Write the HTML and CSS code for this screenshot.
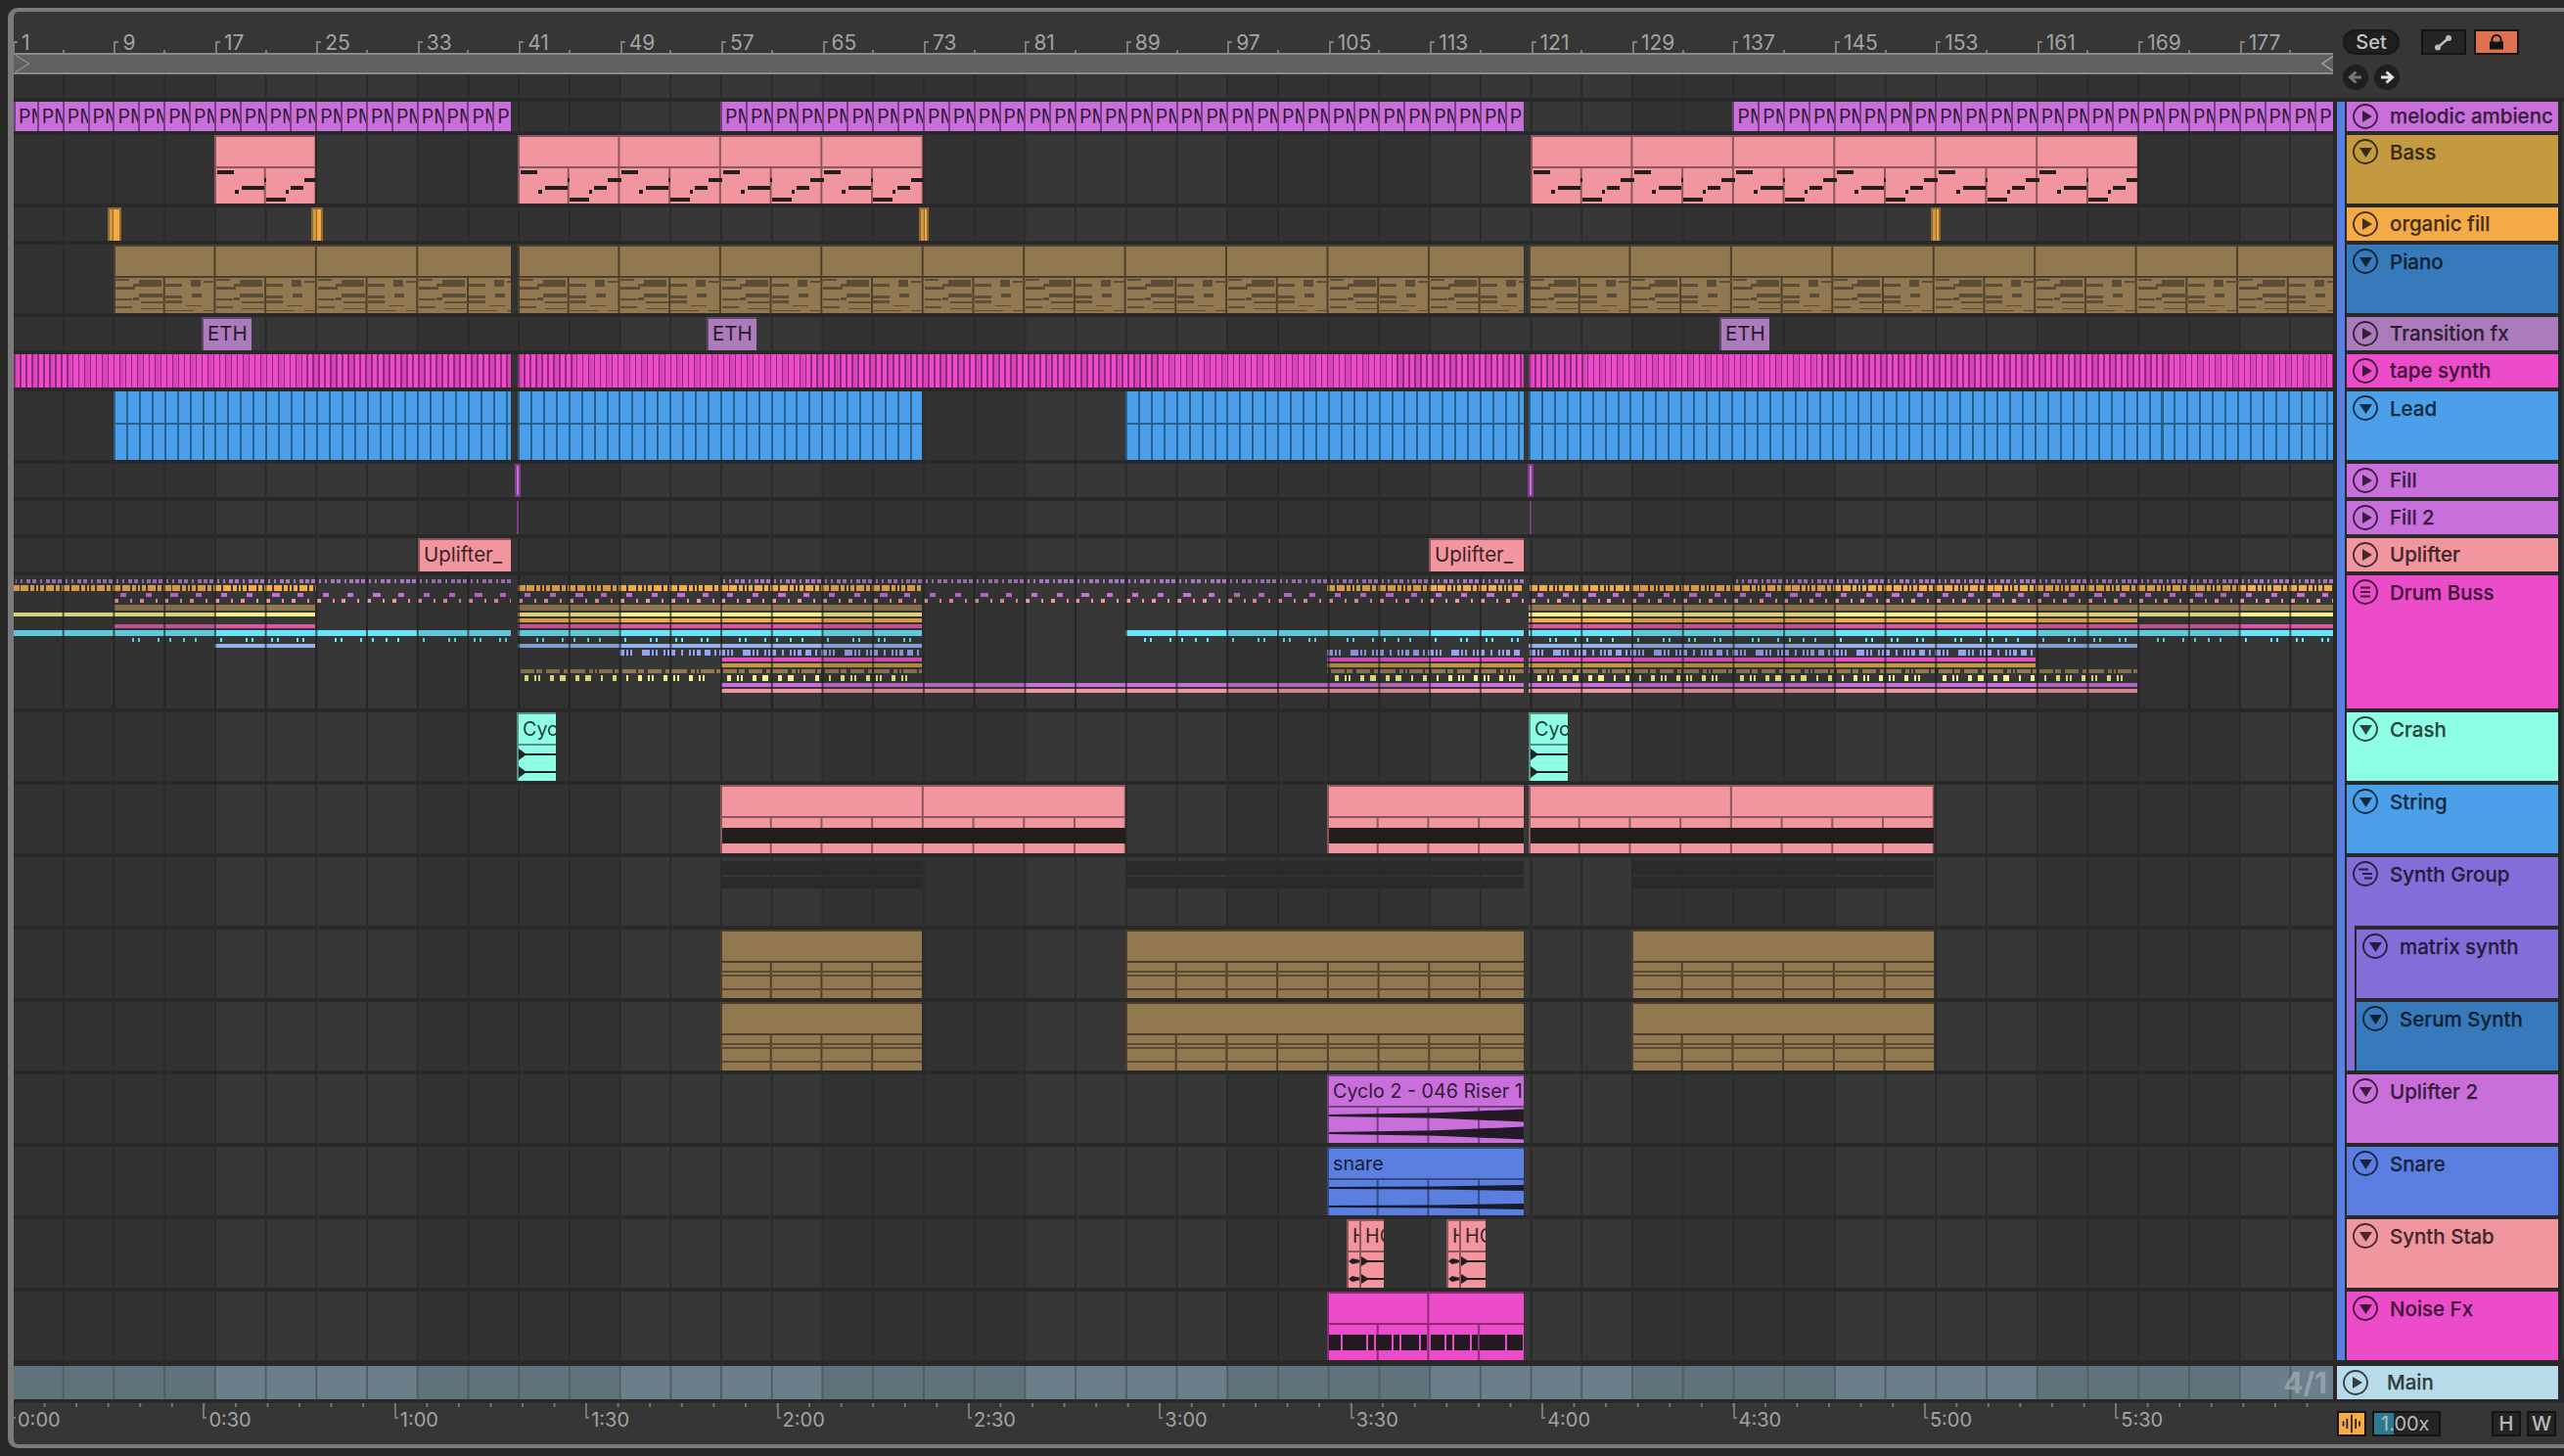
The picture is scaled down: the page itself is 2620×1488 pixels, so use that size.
FILE: index.html
```html
<!DOCTYPE html>
<html lang="en">
<head>
<meta charset="utf-8">
<title>Arrangement View</title>
<link rel="stylesheet" href="styles.css">
</head>
<body>
<svg class="defs" width="0" height="0" aria-hidden="true">
  <symbol id="ic-right" viewBox="0 0 26 26"><circle cx="13" cy="13" r="12" fill="none" stroke="currentColor" stroke-width="1.8"/><polygon points="10,7 20,13 10,19" fill="currentColor"/></symbol>
  <symbol id="ic-down" viewBox="0 0 26 26"><circle cx="13" cy="13" r="12" fill="none" stroke="currentColor" stroke-width="1.8"/><polygon points="7,9 20,9 13.5,19" fill="currentColor"/></symbol>
  <symbol id="ic-group" viewBox="0 0 26 26"><circle cx="13" cy="13" r="12" fill="none" stroke="currentColor" stroke-width="1.8"/><path d="M8 8.5h10M8 13h10M8 17.5h10" stroke="currentColor" stroke-width="2"/></symbol>
  <symbol id="ic-stagger" viewBox="0 0 26 26"><circle cx="13" cy="13" r="12" fill="none" stroke="currentColor" stroke-width="1.8"/><path d="M6 8.5h10M10 13h10M12 17.5h8" stroke="currentColor" stroke-width="2"/></symbol>
</svg>
<div class="frame">
  <div class="top">
    <div class="timeline">
      <div class="ruler">
        <span class="bar">1</span><span class="bar">9</span><span class="bar">17</span><span class="bar">25</span><span class="bar">33</span><span class="bar">41</span><span class="bar">49</span><span class="bar">57</span><span class="bar">65</span><span class="bar">73</span><span class="bar">81</span><span class="bar">89</span><span class="bar">97</span><span class="bar">105</span><span class="bar">113</span><span class="bar">121</span><span class="bar">129</span><span class="bar">137</span><span class="bar">145</span><span class="bar">153</span><span class="bar">161</span><span class="bar">169</span><span class="bar">177</span>
      </div>
      <div class="loop">
        <svg class="chev-l" viewBox="0 0 18 22"><path d="M0.5 0.5 L17 11 L0.5 21.5" fill="none" stroke="#8e8e8e" stroke-width="1.6"/></svg>
        <svg class="chev-r" viewBox="0 0 12 16"><path d="M12 0.5 L1 8 L12 15.5" fill="none" stroke="#9a9a9a" stroke-width="1.6"/></svg>
      </div>
      <div class="lane h24"></div>
    </div>
    <div class="ctrl">
      <div class="ctrl-row">
        <div class="pill">Set</div>
        <div class="sq expand"><svg viewBox="0 0 46 26" width="46" height="26"><path d="M17 18.500 L28 9" stroke="#bdbdbd" stroke-width="2.4"/><circle cx="17" cy="18.500" r="3" fill="#bdbdbd"/><circle cx="28" cy="9" r="3" fill="#bdbdbd"/></svg></div>
        <div class="sq lock"><svg viewBox="0 0 46 26" width="46" height="26"><path d="M18.500 13 V10.500 a4.500 4.500 0 0 1 9 0 V13" fill="none" stroke="#111" stroke-width="2"/><rect x="16" y="12.500" width="14" height="8" fill="#111"/></svg></div>
      </div>
      <div class="ctrl-row nav">
        <div class="round"><svg viewBox="0 0 26 26" width="26" height="26"><path d="M19 13H9M13.500 7.500 7.500 13l6 5.500" fill="none" stroke="#777" stroke-width="3"/></svg></div>
        <div class="round"><svg viewBox="0 0 26 26" width="26" height="26"><path d="M7 13h10M12.500 7.500 18.500 13l-6 5.500" fill="none" stroke="#e4e4e4" stroke-width="3"/></svg></div>
      </div>
    </div>
  </div>

  <div class="main">
    <div class="lanes">
      <div class="lane h30" id="l-melodic"></div>
      <div class="lane h70" id="l-bass"></div>
      <div class="lane h34" id="l-organic"></div>
      <div class="lane h70" id="l-piano"></div>
      <div class="lane h34" id="l-trans"></div>
      <div class="lane h34" id="l-tape"></div>
      <div class="lane h70" id="l-lead"></div>
      <div class="lane h34" id="l-fill"></div>
      <div class="lane h34" id="l-fill2"></div>
      <div class="lane h34" id="l-upl"></div>
      <div class="lane h136" id="l-drum"></div>
      <div class="lane h70" id="l-crash"></div>
      <div class="lane h70" id="l-string"></div>
      <div class="lane h70" id="l-group"></div>
      <div class="lane h70" id="l-matrix"></div>
      <div class="lane h70" id="l-serum"></div>
      <div class="lane h70" id="l-upl2"></div>
      <div class="lane h70" id="l-snare"></div>
      <div class="lane h70" id="l-stab"></div>
      <div class="lane h70" id="l-noise"></div>
    </div>
    <div class="bluebar"></div>
    <div class="heads">
      <div class="head h30 purple"><svg class="ic"><use href="#ic-right"/></svg><span>melodic ambienc</span></div>
      <div class="head h70 gold"><svg class="ic"><use href="#ic-down"/></svg><span>Bass</span></div>
      <div class="head h34 orange"><svg class="ic"><use href="#ic-right"/></svg><span>organic fill</span></div>
      <div class="head h70 steel"><svg class="ic"><use href="#ic-down"/></svg><span>Piano</span></div>
      <div class="head h34 mauve"><svg class="ic"><use href="#ic-right"/></svg><span>Transition fx</span></div>
      <div class="head h34 magenta"><svg class="ic"><use href="#ic-right"/></svg><span>tape synth</span></div>
      <div class="head h70 sky"><svg class="ic"><use href="#ic-down"/></svg><span>Lead</span></div>
      <div class="head h34 purple"><svg class="ic"><use href="#ic-right"/></svg><span>Fill</span></div>
      <div class="head h34 purple"><svg class="ic"><use href="#ic-right"/></svg><span>Fill 2</span></div>
      <div class="head h34 pink"><svg class="ic"><use href="#ic-right"/></svg><span>Uplifter</span></div>
      <div class="head h136 magenta"><svg class="ic"><use href="#ic-group"/></svg><span>Drum Buss</span></div>
      <div class="head h70 mint"><svg class="ic"><use href="#ic-down"/></svg><span>Crash</span></div>
      <div class="head h70 sky"><svg class="ic"><use href="#ic-down"/></svg><span>String</span></div>
      <div class="group violet">
        <div class="head h70 violet"><svg class="ic"><use href="#ic-stagger"/></svg><span>Synth Group</span></div>
        <div class="nest">
          <div class="head h70 violet inner"><svg class="ic"><use href="#ic-down"/></svg><span>matrix synth</span></div>
          <div class="head h70 steel inner"><svg class="ic"><use href="#ic-down"/></svg><span>Serum Synth</span></div>
        </div>
      </div>
      <div class="head h70 purple"><svg class="ic"><use href="#ic-down"/></svg><span>Uplifter 2</span></div>
      <div class="head h70 blue"><svg class="ic"><use href="#ic-down"/></svg><span>Snare</span></div>
      <div class="head h70 pink"><svg class="ic"><use href="#ic-down"/></svg><span>Synth Stab</span></div>
      <div class="head h70 magenta"><svg class="ic"><use href="#ic-down"/></svg><span>Noise Fx</span></div>
    </div>
    <div class="edge"></div>
  </div>

  <div class="foot">
    <div class="lane h34 master"><span class="sig">4/1</span></div>
    <div class="head h34 ice master-head"><svg class="ic"><use href="#ic-right"/></svg><span>Main</span></div>
  </div>

  <div class="timebar">
    <div class="times">
      <span class="time first">0:00</span><span class="time">0:30</span><span class="time">1:00</span><span class="time">1:30</span><span class="time">2:00</span><span class="time">2:30</span><span class="time">3:00</span><span class="time">3:30</span><span class="time">4:00</span><span class="time">4:30</span><span class="time">5:00</span><span class="time">5:30</span>
    </div>
    <div class="tools">
      <div class="wave-btn"><svg viewBox="0 0 30 26" width="26" height="22"><path d="M5 10v6M9.500 7v12M15 2v22M20 7v12M24.500 10v6" stroke="#1a1a1a" stroke-width="2"/></svg></div>
      <div class="speed"><span class="speed-fill"></span><span class="speed-text">1.00x</span></div>
      <div class="key first-key">H</div>
      <div class="key">W</div>
    </div>
  </div>
</div>
<script src="script.js"></script>
</body>
</html>
```
FILE: styles.css
```css
* { box-sizing: border-box; }
html, body { margin: 0; padding: 0; height: 100%; }
body { background: #292929; overflow: hidden; width: 2620px; height: 1488px; font-family: "Inter", "Noto Sans", sans-serif; }
.defs { position: absolute; }

.frame { margin: 8px 0 0 8px; width: 2630px; height: 1472px; border: solid #7b7b7b; border-width: 4px 0 4px 6px; border-radius: 10px 0 0 10px; background: #363636; display: flex; flex-direction: column; }

.top { height: 88px; display: flex; }
.timeline { width: 2370px; display: flex; flex-direction: column; flex: none; }
.ruler { height: 42px; display: flex; overflow: hidden; margin-left: -1px; }
.bar { flex: none; width: 103.440px; padding: 21px 0 0 9px; font-size: 21px; line-height: 22px; color: #a3a3a3;
  background:
    linear-gradient(#7d7d7d, #7d7d7d) 0 bottom / 2px 12px no-repeat,
    linear-gradient(#7d7d7d, #7d7d7d) 0 30px / 5px 2px no-repeat,
    linear-gradient(#7d7d7d, #7d7d7d) 50% bottom / 2px 3px no-repeat; }
.loop { height: 22px; background: #606060; border-top: 2px solid #8a8a8a; border-bottom: 2px solid #8a8a8a; display: flex; justify-content: space-between; align-items: center; }
.chev-l { width: 18px; height: 18px; }
.chev-r { width: 12px; height: 16px; }

.ctrl { padding: 18px 0 0 10px; }
.ctrl-row { display: flex; align-items: center; }
.nav { margin-top: 10px; gap: 6px; }
.pill { width: 58px; height: 26px; border-radius: 13px; background: #1f1f1f; border: 2px solid #171717; color: #c4c4c4; font-size: 20px; font-weight: 500; line-height: 22px; text-align: center; }
.sq { width: 46px; height: 26px; border: 2px solid #141414; overflow: hidden; }
.sq svg { display: block; margin: -2px; }
.expand { margin-left: 22px; background: #252525; }
.lock { margin-left: 8px; background: #dd7250; }
.round { width: 26px; height: 26px; border-radius: 50%; background: #1f1f1f; border: 0; }
.round svg { display: block; }

.main { height: 1290px; flex: none; display: flex; padding-top: 4px; background: #292929; }
.lanes { width: 2370px; flex: none; display: flex; flex-direction: column; gap: 4px; }
.bluebar { width: 8px; margin-left: 4px; background: #5b7fe0; flex: none; }
.heads { width: 216px; margin-left: 2px; flex: none; display: flex; flex-direction: column; gap: 4px; }
.edge { width: 2px; margin-left: 4px; background: #343434; flex: none; }

.h24 { height: 24px; } .h30 { height: 30px; } .h34 { height: 34px; } .h70 { height: 70px; } .h136 { height: 136px; }

.lane { position: relative; overflow: hidden; flex: none;
  background:
    linear-gradient(90deg, #2a2a2a 2px, transparent 2px) -2px 0 / 51.720px 100%,
    linear-gradient(90deg, #323232 50%, #373737 50%) -2px 0 / 413.760px 100%; }

.head { flex: none; display: flex; align-items: flex-start; background: var(--c); color: rgba(0, 0, 0, .72); font-size: 20.500px; font-weight: 500; line-height: 26px; padding: 4px 0 0 6px; -webkit-text-stroke: .25px currentColor; }
.head.h30, .head.h34 { align-items: center; padding-top: 0; }
.head span { margin-left: 12px; padding-top: 1px; white-space: nowrap; overflow: hidden; }
.head.h30 span, .head.h34 span { padding-top: 0; }
.ic { width: 26px; height: 26px; flex: none; }
.group { display: flex; flex-direction: column; height: 218px; background: var(--c); }
.nest { margin-left: 8px; margin-top: 0; padding-top: 4px; display: flex; flex-direction: column; gap: 4px; background: #292929; padding-left: 2px; }
.inner { padding-left: 6px; }

.purple { --c: #c96fdc; } .gold { --c: #c39a3f; } .orange { --c: #f3ab48; } .steel { --c: #367abb; }
.mauve { --c: #ac7bbc; } .magenta { --c: #ec4bca; } .sky { --c: #4a9fe8; } .pink { --c: #f1959f; }
.mint { --c: #8effe6; } .violet { --c: #846dd9; } .blue { --c: #5b7fe0; } .ice { --c: #b7dbe8; } .brown { --c: #927850; }

.clip { position: absolute; top: 0; bottom: 0; background: var(--c); border: solid color-mix(in srgb, var(--c) 58%, #000); border-width: 2px 0 0 2px; display: flex; flex-direction: column; overflow: hidden; color: rgba(0, 0, 0, .78); font-size: 19.700px; line-height: 30px; --d: color-mix(in srgb, var(--c) 58%, #000); }
.clip-head { flex: none; height: 30px; padding-left: 4px; white-space: nowrap; overflow: hidden;
  background: linear-gradient(90deg, var(--d) 2px, transparent 2px) -3px 0 / var(--hdiv, 103.440px) 100%; }
.clip-body { flex: 1; position: relative; border-top: 2px solid var(--d); overflow: hidden;
  background: linear-gradient(90deg, var(--d) 2px, transparent 2px) -3px 0 / 51.720px 100%; }
.clip-body svg { display: block; }
.h34 .clip-head, .h30 .clip-head { height: 100%; background: none; line-height: 30px; font-size: 20.500px; }
.pm { border-width: 0 0 0 2px; }
.h30 .pm .clip-head { line-height: 30px; padding-left: 3px; font-size: 19.500px; }
.brown.clip { --d: #4f3e2a; border-color: #4f3e2a; }

.tape { background:
    repeating-linear-gradient(90deg, rgba(140, 40, 120, .22) 0 3px, transparent 7px 18px),
    repeating-linear-gradient(90deg, #8f2b7a 0 1.600px, #ec4bca 1.600px 5.990px);
  border-color: #8a2a76; border-width: 2px 0 3px 2px; }
.lead { background:
    linear-gradient(#27628f, #27628f) 0 32px / 100% 2px no-repeat,
    repeating-linear-gradient(90deg, #27628f 0 2px, #4a9fe8 2px 12.930px);
  border-color: #27628f; }
.stick { border-width: 2px; border-color: #7e3f8d; }
.thin { top: 0; bottom: 0; border: 0; width: 2px; background: #7a3b88; }
.organic { background: linear-gradient(90deg, #d2983f 0 3px, #8f6a30 3px 4px, #f3ab48 4px); border-color: #8f6a30; border-width: 2px 2px 0 2px; }
.shadow { position: absolute; background: #2a2a2a; }
.drum-svg { position: absolute; left: 0; top: 0; display: block; }
.drum-shade { position: absolute; inset: 0;
  background: linear-gradient(90deg, rgba(35, 35, 35, .7) 2px, transparent 2px) -2px 0 / 51.720px 100%; }

.foot { height: 44px; flex: none; display: flex; padding: 6px 0 4px; background: #292929; }
.master { width: 2370px; background:
    linear-gradient(90deg, #505f66 2px, transparent 2px) -2px 0 / 51.720px 100%,
    linear-gradient(90deg, #5e737b 50%, #6a7f89 50%) -2px 0 / 413.760px 100%; }
.sig { position: absolute; right: 6px; top: 0; font-size: 30px; line-height: 34px; font-weight: 700; color: rgba(205, 215, 220, .42); }
.master-head { width: 226px; margin-left: 4px; }
.master-head span { margin-left: 19px; font-weight: 500; }

.timebar { height: 42px; flex: none; display: flex; }
.times { width: 2370px; flex: none; display: flex; overflow: hidden; margin-left: -2px;
  background: linear-gradient(90deg, #777 2px, transparent 2px) 0 0 / 32.570px 4px repeat-x; }
.time { flex: none; width: 195.400px; padding: 5px 0 0 6px; font-size: 20px; line-height: 24px; color: #a3a3a3;
  background:
    linear-gradient(#777, #777) 0 0 / 2px 15px no-repeat,
    linear-gradient(#777, #777) 0 14px / 4px 2px no-repeat; }
.tools { display: flex; padding-top: 8px; margin-left: 6px; }
.wave-btn { width: 30px; height: 26px; background: #f3ab48; border: 2px solid #141414; display: flex; align-items: center; justify-content: center; }
.speed { position: relative; width: 70px; height: 26px; margin-left: 6px; background: #242424; border: 2px solid #141414; }
.speed-fill { position: absolute; left: 0; top: 0; bottom: 0; width: 20px; background: #2d7a90; }
.speed-text { position: relative; display: block; padding-left: 7px; font-size: 20px; line-height: 22px; color: #b9b9b9; }
.key { width: 30px; height: 26px; margin-left: 6px; background: #242424; border: 2px solid #141414; color: #b9b9b9; font-size: 20px; font-weight: 500; line-height: 22px; text-align: center; }
.first-key { margin-left: 52px; }
```
FILE: script.js
```js
(function () {
  var NS = 'http://www.w3.org/2000/svg';
  var B = 12.93;
  var ORIGIN = -2;
  var P4 = 51.72, P8 = 103.44, P16 = 206.88;
  function bar(n) { return ORIGIN + (n - 1) * B; }
  function lane(id) { return document.getElementById('l-' + id); }

  function svgRects(w, h, rects, polys) {
    var s = document.createElementNS(NS, 'svg');
    s.setAttribute('width', w);
    s.setAttribute('height', h);
    s.setAttribute('viewBox', '0 0 ' + w + ' ' + h);
    (rects || []).forEach(function (r) {
      var e = document.createElementNS(NS, 'rect');
      e.setAttribute('x', r[0]); e.setAttribute('y', r[1]);
      e.setAttribute('width', r[2]); e.setAttribute('height', r[3]);
      e.setAttribute('fill', r[4]);
      if (r[5]) e.setAttribute('fill-opacity', r[5]);
      e.setAttribute('shape-rendering', 'crispEdges');
      s.appendChild(e);
    });
    (polys || []).forEach(function (p) {
      var e = document.createElementNS(NS, 'polygon');
      e.setAttribute('points', p[0]);
      e.setAttribute('fill', p[1]);
      s.appendChild(e);
    });
    return s;
  }

  // x1, x2 are lane coordinates in px
  function clip(id, x1, x2, cls, opt) {
    opt = opt || {};
    var c = document.createElement('div');
    c.className = 'clip ' + cls;
    c.style.left = x1 + 'px';
    c.style.width = (x2 - x1) + 'px';
    if (opt.hdiv) c.style.setProperty('--hdiv', opt.hdiv + 'px');
    if (opt.head !== false) {
      var h = document.createElement('div');
      h.className = 'clip-head';
      h.textContent = opt.label || '';
      c.appendChild(h);
    }
    if (opt.body) {
      var b = document.createElement('div');
      b.className = 'clip-body';
      var r = opt.body(x2 - x1 - 2);
      b.appendChild(svgRects(x2 - x1 - 2, 36, r.rects, r.polys));
      c.appendChild(b);
    }
    lane(id).appendChild(c);
    return c;
  }

  function scr(x) { return x - 14; }
  function repeat(items, period, w, color) {
    var out = [];
    for (var k = 0; k * period < w; k++) {
      items.forEach(function (it) {
        out.push([k * period + it[0], it[2], it[1] - it[0], it[3], color]);
      });
    }
    return out;
  }

  // ---- melodic ambient
  function pmRun(x1bar, x2) {
    for (var n = x1bar; bar(n) < x2 - 1; n += 2) {
      clip('melodic', Math.max(bar(n), 0), Math.min(bar(n + 2), x2), 'purple pm', { label: 'PM' });
    }
  }
  pmRun(1, scr(522)); pmRun(57, scr(1557)); pmRun(137, 2370);

  // ---- Bass
  var DARK = '#231d1e';
  var bassNotes = [[1, 18, 2, 4], [49, 51, 10, 4], [90, 104, 10, 4], [26, 49, 18, 4], [76, 89, 18, 4], [19, 23, 22, 4], [71, 74, 22, 4], [51, 71, 30, 4]];
  function bassBody(w) { return { rects: repeat(bassNotes, P8, w, DARK) }; }
  [[17, 25], [41, 73], [121, 169]].forEach(function (r) {
    clip('bass', bar(r[0]), bar(r[1]), 'pink', { body: bassBody });
  });

  // ---- organic fill
  [[110, 124], [318, 330], [939, 949], [1973, 1983]].forEach(function (r) {
    clip('organic', scr(r[0]), scr(r[1]), 'organic orange', { head: false });
  });

  // ---- Piano
  var pianoNotes = [[0, 14, 1, 2], [24, 47, 2, 7], [18, 24, 6, 3], [51, 68, 6, 3], [77, 87, 2, 7], [90, 103, 3, 2],
    [0, 20, 9, 3], [24, 48, 16, 4], [51, 68, 18, 3], [78, 88, 16, 4], [0, 17, 21, 2], [18, 24, 20, 3],
    [26, 50, 24, 2], [51, 68, 23, 3], [72, 88, 28, 1], [0, 17, 29, 2], [26, 50, 31, 1], [51, 80, 33, 1], [90, 103, 33, 1]];
  function pianoBody(w) { return { rects: repeat(pianoNotes, P8, w, '#5d4c37') }; }
  [[116, 522], [529, 1557], [1562, 2384]].forEach(function (r) {
    clip('piano', scr(r[0]), scr(r[1]), 'brown', { body: pianoBody });
  });

  // ---- Transition fx
  [[206, 257], [722, 773], [1757, 1808]].forEach(function (r) {
    clip('trans', scr(r[0]), scr(r[1]), 'mauve', { label: 'ETH' });
  });

  // ---- tape synth
  [[14, 522], [529, 1557], [1562, 2384]].forEach(function (r) {
    clip('tape', scr(r[0]), scr(r[1]), 'tape', { head: false });
  });

  // ---- Lead
  [[116, 522], [529, 942], [1150, 1557], [1562, 2384]].forEach(function (r) {
    clip('lead', scr(r[0]), scr(r[1]), 'lead', { head: false });
  });

  // ---- Fill / Fill 2
  [[526, 532], [1561, 1567]].forEach(function (r) {
    clip('fill', scr(r[0]), scr(r[1]), 'purple stick', { head: false });
  });
  [528, 1563].forEach(function (x) {
    clip('fill2', scr(x), scr(x + 2), 'thin', { head: false });
  });

  // ---- Uplifter
  [[427, 522], [1460, 1557]].forEach(function (r) {
    clip('upl', scr(r[0]), scr(r[1]), 'pink', { label: 'Uplifter_' });
  });

  // ---- Drum Buss (collapsed group overview)
  var L = [14, 322], S1 = [529, 942], S2 = [1150, 1557], S3 = [1562, 2384], S4 = [1562, 2184], S5 = [1356, 1557], S6 = [1562, 2080];
  var purpleItems = [[0, 4], [6, 10], [12, 16], [20, 22], [26, 28], [32, 36], [38, 42], [46, 48]];
  var orangeItems = [[0, 8], [10, 14], [16, 18], [20, 24], [26, 34], [36, 40], [42, 50]];
  var blueItems = [[0, 6], [8, 10], [12, 14], [24, 32], [34, 36], [38, 40], [46, 48], [50, 52], [54, 58], [64, 66], [72, 74], [76, 78], [80, 84], [88, 94], [98, 100]];
  var brownItems = [[0, 14], [16, 22], [26, 40], [44, 48], [50, 66], [70, 74], [76, 78], [80, 94], [96, 100]];
  var yellowItems = [[0, 4], [10, 12], [14, 16], [26, 30], [36, 42], [52, 56], [62, 68], [78, 80], [90, 94], [104, 106], [116, 120], [126, 128], [130, 132], [142, 146], [152, 154], [156, 158], [168, 172], [178, 180], [182, 184]];
  var cyanItems = [19, 25, 45, 57, 71, 83, 109, 135, 141, 161, 167, 187, 193].map(function (a) { return [a, a + 2]; });
  var minis = [
    { y: 592, h: 4, c: '#a877bf', s: [[16, 522], [738, 1557], [1771, 2384]], p: P4, ph: 1340, it: purpleItems },
    { y: 598, h: 6, c: '#f3ab48', s: [L, S1, S5, S3], p: P4, ph: 1366, it: orangeItems },
    { y: 606, h: 4, c: '#c96fdc', s: [[117, 522], [529, 1557], S3], p: P8, ph: 1364, it: [[0, 6], [25.9, 31.9], [51.7, 59.7], [77.6, 83.6]] },
    { y: 612, h: 4, c: '#f1959f', s: [[117, 522], [529, 1557], S3], p: P4 / 2, ph: 1358, it: [[0, 4], [16, 18]] },
    { y: 618, h: 6, c: '#927850', s: [[116, 322], S1, S3] },
    { y: 626, h: 4, c: '#f8f08a', s: [L, S1, S3] },
    { y: 632, h: 4, c: '#f3ab48', s: [S1, S4] },
    { y: 638, h: 4, c: '#dc57a6', s: [[116, 322], S1, S3] },
    { y: 644, h: 6, c: '#68e5fb', s: [[14, 522], S1, S2, S3] },
    { y: 652, h: 4, c: '#68e5fb', s: [[117, 522], S1, S2, S3], p: P16, ph: 1357, it: cyanItems },
    { y: 658, h: 4, c: '#8fb4ec', s: [[219, 322], S1, S4] },
    { y: 664, h: 6, c: '#93a3f8', s: [[633, 942], S5, S6], p: P8, ph: 1356, it: blueItems },
    { y: 672, h: 4, c: '#ec4bca', s: [[737, 942], S5, S6] },
    { y: 678, h: 4, c: '#c39a3f', s: [[737, 942], S5, S6] },
    { y: 684, h: 4, c: '#927850', s: [[532, 942], S5, S4], p: P8, ph: 1360, it: brownItems },
    { y: 690, h: 6, c: '#f8f08a', s: [[532, 942], S5, S4], p: P16, ph: 1364, it: yellowItems },
    { y: 698, h: 4, c: '#c96fdc', s: [[737, 1557], S4] },
    { y: 704, h: 4, c: '#f1959f', s: [[737, 1557], S4] }
  ];
  var drumRects = [];
  // Clips in the overview are dimmed in every other 16-bar band.
  function addDrum(x1, x2, y, h, c) {
    var first = Math.floor((x1 - 12) / P16);
    var last = Math.floor((x2 - 12) / P16);
    for (var idx = first; idx <= last; idx++) {
      var a = Math.max(x1, 12 + idx * P16);
      var b = Math.min(x2, 12 + (idx + 1) * P16);
      if (b - a < 0.01) continue;
      var o = Math.abs(idx % 2) === 0 ? 0.84 : 0;
      drumRects.push([scr(a), y, b - a, h, c, o]);
    }
  }
  minis.forEach(function (m) {
    var y = m.y - 588;
    m.s.forEach(function (sec) {
      if (!m.p) { addDrum(sec[0], sec[1], y, m.h, m.c); return; }
      var k = Math.floor((sec[0] - m.ph) / m.p) - 1;
      for (; m.ph + k * m.p < sec[1]; k++) {
        m.it.forEach(function (it) {
          var a = Math.max(m.ph + k * m.p + it[0], sec[0]);
          var b = Math.min(m.ph + k * m.p + it[1], sec[1]);
          if (b > a) addDrum(Math.round(a), Math.round(a) + Math.max(Math.round(b - a), 1), y, m.h, m.c);
        });
      }
    });
  });
  var drum = svgRects(2370, 136, drumRects);
  drum.setAttribute('class', 'drum-svg');
  lane('drum').appendChild(drum);
  var shade = document.createElement('div');
  shade.className = 'drum-shade';
  lane('drum').appendChild(shade);

  // ---- Crash
  function crashBody(w) {
    var ink = '#1f2624';
    return {
      rects: [[0, 8, w, 2, ink], [0, 26, w, 2, ink]],
      polys: [['0,3 8,9 0,15', ink], ['0,21 8,27 0,33', ink]]
    };
  }
  [[528, 568], [1562, 1602]].forEach(function (r) {
    clip('crash', scr(r[0]), scr(r[1]), 'mint', { label: 'Cyclo', body: crashBody });
  });

  // ---- String
  function stringBody(w) { return { rects: [[0, 10, w, 16, DARK]] }; }
  [[736, 1150], [1356, 1557], [1562, 1976]].forEach(function (r) {
    clip('string', scr(r[0]), scr(r[1]), 'pink', { hdiv: P16, body: stringBody });
  });

  // ---- Synth group: muted overview bands
  [[736, 942], [1150, 1557], [1668, 1976]].forEach(function (r) {
    [[4, 14], [20, 12]].forEach(function (band) {
      var d = document.createElement('div');
      d.className = 'shadow';
      d.style.left = scr(r[0]) + 'px';
      d.style.width = (r[1] - r[0]) + 'px';
      d.style.top = band[0] + 'px';
      d.style.height = band[1] + 'px';
      lane('group').appendChild(d);
    });
  });

  // ---- matrix / serum chords
  function chordBody(w) {
    var ink = '#5a4a36';
    return { rects: [[0, 8, w, 2, ink], [0, 12, w, 2, ink], [0, 26, w, 2, ink]] };
  }
  ['matrix', 'serum'].forEach(function (id) {
    [[736, 942], [1150, 1557], [1667, 1976]].forEach(function (r) {
      clip(id, scr(r[0]), scr(r[1]), 'brown', { hdiv: 2000, body: chordBody });
    });
  });

  // ---- waveform wedges
  function wedge(w, y, a, b, ink) {
    return [[0, y - a, w * 0.55, y - (a + (b - a) * 0.3), w, y - b, w, y + b, w * 0.55, y + (a + (b - a) * 0.3), 0, y + a].join(','), ink];
  }
  clip('upl2', scr(1356), scr(1557), 'purple', {
    label: 'Cyclo 2 - 046 Riser 1',
    hdiv: 2000,
    body: function (w) { var i = '#231a26'; return { polys: [wedge(w, 8, 1, 6.5, i), wedge(w, 26, 1, 6.5, i)] }; }
  });
  clip('snare', scr(1356), scr(1557), 'blue', {
    label: 'snare',
    hdiv: 2000,
    body: function (w) { var i = '#171b2a'; return { polys: [wedge(w, 8, 1, 3, i), wedge(w, 27, 1, 3, i)] }; }
  });

  // ---- Synth Stab
  var ink = '#231d1e';
  function stabA() {
    return { polys: [['0,9 4,6 12,8 12,10 4,12', ink], ['0,27 4,24 12,26 12,28 4,30', ink]] };
  }
  function stabB(w) {
    return {
      rects: [[0, 8, w, 2, ink], [0, 26, w, 2, ink]],
      polys: [['0,4 8,9 0,14', ink], ['0,22 8,27 0,32', ink]]
    };
  }
  [[1376, 1389, 1414], [1478, 1491, 1518]].forEach(function (r) {
    clip('stab', scr(r[0]), scr(r[1]), 'pink', { label: 'H', body: stabA });
    clip('stab', scr(r[1]), scr(r[2]), 'pink', { label: 'HG', body: stabB });
  });

  // ---- Noise Fx
  var blocks = [[54, 90], [96, 168], [174, 192], [198, 246], [252, 270], [276, 330], [336, 354], [366, 408], [414, 432], [438, 486], [492, 510], [516, 594], [600, 648]];
  clip('noise', scr(1356), scr(1557), 'magenta', {
    body: function () {
      return { rects: blocks.map(function (b) { return [(b[0] - 54) / 3, 10, (b[1] - b[0]) / 3, 16, '#231a22']; }) };
    }
  });
})();
```
